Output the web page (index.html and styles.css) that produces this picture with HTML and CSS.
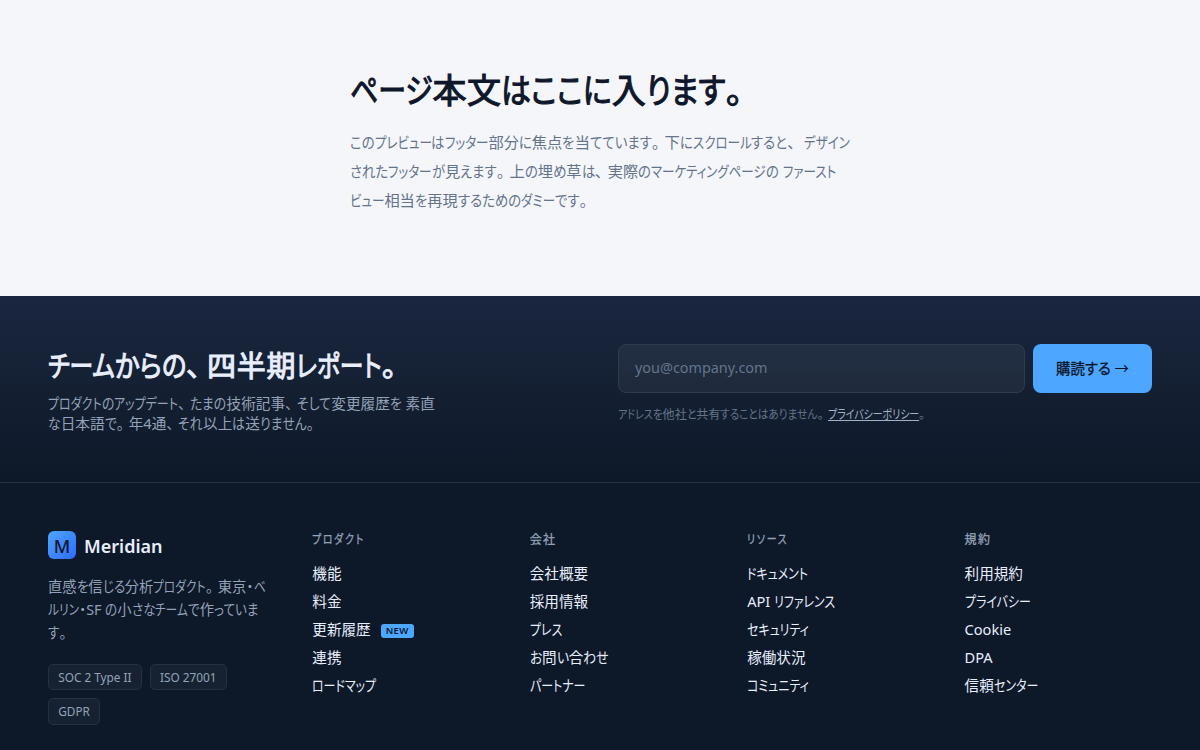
FILE: index.html
```html
<!DOCTYPE html>
<html lang="ja">
<head>
  <meta charset="UTF-8" />
  <title>Meridian</title>
  <meta name="viewport" content="width=device-width, initial-scale=1.0" />
  <link rel="stylesheet" href="styles.css">
</head>
<body>

  <main class="page">
    <div class="page-inner">
      <h1>ページ本文はここに入ります。</h1>
      <p>このプレビューはフッター部分に焦点を当てています。下にスクロールすると、 デザイン<br>
        されたフッターが見えます。上の埋め草は、実際のマーケティングページの ファースト<br>
        ビュー相当を再現するためのダミーです。</p>
    </div>
  </main>

  <footer class="footer">
    <section class="newsletter">
      <div class="newsletter-text">
        <h2>チームからの、四半期レポート。</h2>
        <p>プロダクトのアップデート、たまの技術記事、そして変更履歴を 素直<br>
          な日本語で。年4通、それ以上は送りません。</p>
      </div>
      <div class="newsletter-form">
        <form class="form-row">
          <input type="email" placeholder="you@company.com" />
          <button type="button">購読する <span class="arrow">→</span></button>
        </form>
        <p class="note">アドレスを他社と共有することはありません。<a href="#">プライバシーポリシー</a>。</p>
      </div>
    </section>

    <section class="columns">
      <div class="brand">
        <div class="logo"><span class="logo-mark">M</span><span class="logo-name">Meridian</span></div>
        <p>直感を信じる分析プロダクト。東京・ベ<br>ルリン・SF の小さなチームで作っていま<br>す。</p>
        <div class="badges">
          <span>SOC 2 Type II</span>
          <span>ISO 27001</span>
          <span>GDPR</span>
        </div>
      </div>
      <nav class="col">
        <h3>プロダクト</h3>
        <ul>
          <li><a href="#">機能</a></li>
          <li><a href="#">料金</a></li>
          <li><a href="#">更新履歴</a><span class="new">NEW</span></li>
          <li><a href="#">連携</a></li>
          <li><a href="#">ロードマップ</a></li>
        </ul>
      </nav>
      <nav class="col">
        <h3>会社</h3>
        <ul>
          <li><a href="#">会社概要</a></li>
          <li><a href="#">採用情報</a></li>
          <li><a href="#">プレス</a></li>
          <li><a href="#">お問い合わせ</a></li>
          <li><a href="#">パートナー</a></li>
        </ul>
      </nav>
      <nav class="col">
        <h3>リソース</h3>
        <ul>
          <li><a href="#">ドキュメント</a></li>
          <li><a href="#">API リファレンス</a></li>
          <li><a href="#">セキュリティ</a></li>
          <li><a href="#">稼働状況</a></li>
          <li><a href="#">コミュニティ</a></li>
        </ul>
      </nav>
      <nav class="col">
        <h3>規約</h3>
        <ul>
          <li><a href="#">利用規約</a></li>
          <li><a href="#">プライバシー</a></li>
          <li><a href="#">Cookie</a></li>
          <li><a href="#">DPA</a></li>
          <li><a href="#">信頼センター</a></li>
        </ul>
      </nav>
    </section>
  </footer>

  <script src="kana.js"></script>
</body>
</html>
```

FILE: kana.js
```js
// Condenses kana runs so they set narrower than the kanji around them
const runs = [
  ["kata", /^[ァ-ヺー]+/, 0.82],
  ["hira", /^[ぁ-ん]+/, 0.88],
  ["punc", /^[、。]+/, 1],
  ["", /^[^ァ-ヺーぁ-ん、。]+/, 1]
];

const walker = document.createTreeWalker(document.body, NodeFilter.SHOW_TEXT);
const nodes = [];
while (walker.nextNode()) {
  const parent = walker.currentNode.parentElement;
  if (parent.tagName !== "SCRIPT" && /[ぁ-ヺ、。]/.test(walker.currentNode.data)) {
    nodes.push(walker.currentNode);
  }
}

const condensed = [];

nodes.forEach((node) => {
  let text = node.data;
  const out = document.createDocumentFragment();
  while (text) {
    for (const [name, re, scale] of runs) {
      const m = text.match(re);
      if (!m) continue;
      if (name) {
        const span = document.createElement("span");
        span.className = name;
        span.textContent = m[0];
        out.appendChild(span);
        if (scale < 1) condensed.push([span, scale]);
      } else {
        out.appendChild(document.createTextNode(m[0]));
      }
      text = text.slice(m[0].length);
      break;
    }
  }
  node.replaceWith(out);
});

const widths = condensed.map(([span]) => span.getBoundingClientRect().width);
condensed.forEach(([span, scale], i) => {
  if (span.closest("button")) return;
  span.style.transform = `scaleX(${scale})`;
  span.style.marginRight = `${-(1 - scale) * widths[i]}px`;
});
```

FILE: styles.css
```css
* {
  box-sizing: border-box;
}

body {
  margin: 0;
  height: 750px;
  overflow: hidden;
  background: #f5f6fa;
  color: #0f172a;
  font-family: "Noto Sans", "Noto Sans CJK JP", sans-serif;
  font-feature-settings: "palt";
}

h1, h2, h3, p, ul {
  margin: 0;
  padding: 0;
}

.kata,
.hira {
  display: inline-block;
  transform-origin: left center;
}

.punc {
  letter-spacing: 0.33em;
}

.page {
  height: 296px;
  padding-top: 65px;
}

.page-inner {
  width: 500px;
  margin: 0 auto;
  white-space: nowrap;
}

.page h1 {
  font-size: 34px;
  line-height: 51px;
  font-weight: 400;
  letter-spacing: 0.3px;
  -webkit-text-stroke: 1.1px #0f172a;
}

.page p {
  margin-top: 12px;
  font-size: 15.25px;
  line-height: 28.8px;
  color: #64748b;
}

.footer {
  height: 454px;
  background: #0d1829;
  color: #e8eefc;
}

.newsletter {
  height: 187px;
  padding: 48px 48px 0;
  display: grid;
  grid-template-columns: 1fr 1fr;
  gap: 36px;
  background: linear-gradient(180deg, #1a2640 0%, #142032 50%, #0d1829 100%);
  border-bottom: 1px solid #27313f;
  white-space: nowrap;
}

.newsletter h2 {
  font-size: 29px;
  line-height: 44px;
  font-weight: 400;
  letter-spacing: 0.7px;
  -webkit-text-stroke: 1px #e8eefc;
}

h1 .kata,
h1 .hira,
h2 .kata,
h2 .hira {
  letter-spacing: 0;
}

h2 .punc {
  letter-spacing: 0.22em;
}

.newsletter-text p {
  margin-top: 5px;
  font-size: 14.65px;
  line-height: 20px;
  color: #94a3b8;
}

.form-row {
  display: flex;
  gap: 8px;
}

.form-row input {
  flex: 1;
  height: 49px;
  padding: 0 16px 2px;
  border: 1px solid #2f3b4d;
  border-radius: 8px;
  background: rgba(255, 255, 255, 0.05);
  font: 14.4px "Noto Sans", sans-serif;
  color: #e8eefc;
}

.form-row input::placeholder {
  color: #64748b;
}

.form-row button {
  width: 119px;
  height: 49px;
  padding: 0 0 2px;
  border: 0;
  border-radius: 8px;
  background: #4da6ff;
  color: #0a1628;
  font: 400 14.4px "Noto Sans", "Noto Sans CJK JP", sans-serif;
  font-feature-settings: "palt";
  -webkit-text-stroke: 0.3px #0a1628;
}

.arrow {
  -webkit-text-stroke: 0;
}

.note {
  margin-top: 13px;
  font-size: 12.1px;
  line-height: 18px;
  color: #64748b;
}

.note a {
  color: #a3b1c6;
}

.note a span {
  text-decoration: underline;
}

.columns {
  padding: 48px 48px 0;
  display: grid;
  grid-template-columns: 1.25fr repeat(4, 1fr);
  gap: 30px;
  white-space: nowrap;
}

.logo {
  display: flex;
  align-items: center;
  gap: 8px;
  height: 28px;
}

.logo-mark {
  width: 28px;
  height: 28px;
  border-radius: 6px;
  background: linear-gradient(135deg, #4da6ff, #2f6bff);
  color: #0a1628;
  font-size: 18px;
  line-height: 30px;
  font-weight: 500;
  text-align: center;
}

.logo-name {
  padding-top: 2px;
  font-size: 18px;
  line-height: 28px;
  font-weight: 600;
}

.brand p {
  margin-top: 16px;
  font-size: 14.3px;
  line-height: 23px;
  color: #94a3b8;
}

.badges {
  margin-top: 20px;
  display: flex;
  flex-wrap: wrap;
  gap: 8px;
}

.badges span {
  height: 26.4px;
  padding: 0 9.2px;
  border: 1px solid #253142;
  border-radius: 5px;
  background: #162232;
  font-size: 11.8px;
  line-height: 24px;
  color: #94a3b8;
}

.col h3 {
  height: 18px;
  font-size: 12px;
  line-height: 18px;
  font-weight: 400;
  letter-spacing: 1.4px;
  color: #94a3b8;
  -webkit-text-stroke: 0.3px #94a3b8;
}

.col h3 .kata {
  letter-spacing: 2.2px;
}

.col ul {
  margin-top: 10px;
  list-style: none;
}

.col li {
  display: flex;
  align-items: center;
  height: 28px;
  font-size: 14.6px;
  line-height: 28px;
}

.col a {
  color: #e8eefc;
  text-decoration: none;
}

.new {
  height: 14px;
  margin: 4px 0 0 10px;
  padding: 0 5px;
  border-radius: 3px;
  background: #4da6ff;
  color: #0a1628;
  font-size: 9.5px;
  line-height: 14px;
  font-weight: 600;
  letter-spacing: 0.4px;
}
```
